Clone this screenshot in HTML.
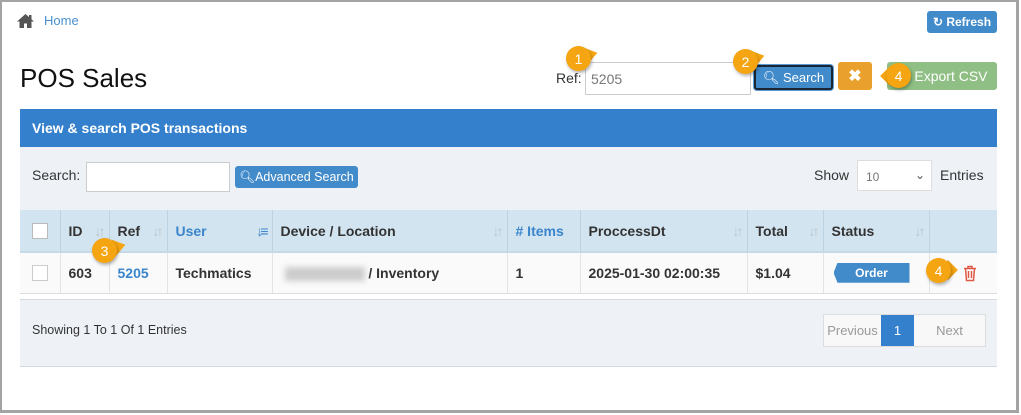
<!DOCTYPE html>
<html><head><meta charset="utf-8"><style>
*{box-sizing:border-box;margin:0;padding:0}
body{width:1021px;height:415px;background:#fff;font-family:"Liberation Sans",Arial,sans-serif;position:relative;overflow:hidden;color:#333}
.a{position:absolute}
.frame{left:0;top:0;width:1019px;height:413px;border:2px solid #a3a3a3;border-right-width:3px;border-bottom-width:3px}
.btn{position:absolute;color:#fff;border-radius:3px;font-size:13px;display:flex;align-items:center;justify-content:center}
th,td{font-size:14px;font-weight:bold;text-align:left;padding-left:8px;border-right:1px solid #e3e3e3}
.cl{position:absolute;width:25px;height:25px}
.cl .c{position:absolute;left:0;top:0;width:25px;height:25px;border-radius:50%;background:#f5a511;color:#fff;font-size:14px;display:flex;align-items:center;justify-content:center;box-shadow:1px 2px 3px rgba(0,0,0,.3);z-index:2}
.cl .t{position:absolute;width:14px;height:14px;background:#f5a511;top:6px;z-index:1}
.srt{position:absolute;right:6px;top:13px;color:#b8c4cc;font-size:14px;font-weight:bold;letter-spacing:-3px}
</style></head><body>
<div class="a frame"></div>
<svg class="a" style="left:16px;top:13px" width="19" height="16" viewBox="0 0 19 16"><path d="M9.5 1L1 8.5h2.5V15h4.5v-4.5h3V15h4.5V8.5H18z" fill="#555"/><rect x="13" y="2" width="2.5" height="4" fill="#555"/></svg>
<div class="a" style="left:44px;top:13px;font-size:13px;color:#4a90cf">Home</div>
<div class="btn" style="left:927px;top:11px;width:70px;height:22px;background:#428bca;font-weight:bold;font-size:12px">&#x21bb; Refresh</div>
<div class="a" style="left:20px;top:63px;font-size:26px;color:#111">POS Sales</div>
<div class="a" style="left:556px;top:70px;font-size:14px;color:#333">Ref:</div>
<div class="a" style="left:585px;top:62px;width:166px;height:33px;border:1px solid #ccc;padding:8px 5px;font-size:14px;color:#777">5205</div>
<div class="btn" style="left:754px;top:65px;width:79px;height:25px;background:#428bca;border:2px solid #1b2633;box-shadow:0 0 0 1px #5a9bd5">&#x1F50D;&#xFE0E; Search</div>
<div class="btn" style="left:838px;top:62px;width:34px;height:28px;background:#e9a02d;font-weight:bold;font-size:16px">&#x2716;</div>
<div class="btn" style="left:887px;top:62px;width:110px;height:28px;background:#8fbf84;font-size:14px">&#x2601; Export CSV</div>
<div class="a" style="left:20px;top:109px;width:977px;height:38px;background:#3580cc;color:#fff;font-weight:bold;font-size:14px;padding:11px 12px">View &amp; search POS transactions</div>
<div class="a" style="left:20px;top:147px;width:977px;height:64px;background:#eef2f7"></div>
<div class="a" style="left:32px;top:167px;font-size:14px">Search:</div>
<div class="a" style="left:86px;top:162px;width:144px;height:30px;border:1px solid #ccc;background:#fff"></div>
<div class="btn" style="left:235px;top:166px;width:123px;height:22px;background:#428bca;font-size:12.5px">&#x1F50D;&#xFE0E;Advanced Search</div>
<div class="a" style="left:814px;top:167px;font-size:14px">Show</div>
<div class="a" style="left:857px;top:160px;width:75px;height:31px;border:1px solid #ddd;background:#fff;font-size:12px;color:#777;padding:9px 8px">10<span style="position:absolute;right:6px;top:7px;color:#555">&#x2304;</span></div>
<div class="a" style="left:940px;top:167px;font-size:14px">Entries</div>
<table class="a" style="left:20px;top:210px;width:977px;border-collapse:collapse;border-bottom:1px solid #ddd">
<tr style="height:42px;background:#d2e4f0">
<th style="width:40px;border-right-color:#bcd3e3"><div style="width:16px;height:16px;border:1px solid #bbb;background:#fff;margin-left:4px"></div></th>
<th style="width:49px;position:relative;border-right-color:#bcd3e3">ID<span class="srt">&#x2193;&#x2191;</span></th>
<th style="width:58px;position:relative;border-right-color:#bcd3e3">Ref<span class="srt">&#x2193;&#x2191;</span></th>
<th style="width:105px;position:relative;color:#3a85cc;border-right-color:#bcd3e3">User<span class="srt" style="color:#3a85cc">&#x2193;&#x2261;</span></th>
<th style="width:235px;position:relative;border-right-color:#bcd3e3">Device / Location<span class="srt">&#x2193;&#x2191;</span></th>
<th style="width:73px;color:#3a85cc;border-right-color:#bcd3e3"># Items</th>
<th style="width:167px;position:relative;border-right-color:#bcd3e3">ProccessDt<span class="srt">&#x2193;&#x2191;</span></th>
<th style="width:76px;position:relative;border-right-color:#bcd3e3">Total<span class="srt">&#x2193;&#x2191;</span></th>
<th style="width:106px;position:relative;border-right-color:#bcd3e3">Status<span class="srt">&#x2193;&#x2191;</span></th>
<th style="border-right:none"></th></tr>
<tr style="height:41px;background:#fafafa;border-top:2px solid #c5d9e6">
<td><div style="width:16px;height:16px;border:1px solid #ccc;background:#fff;margin-left:4px"></div></td>
<td>603</td><td style="color:#3a85cc">5205</td><td>Techmatics</td>
<td><span style="display:inline-block;width:80px;height:14px;background:#ccc;filter:blur(3px);vertical-align:middle;margin-left:4px"></span> / Inventory</td>
<td>1</td><td>2025-01-30 02:00:35</td><td>$1.04</td>
<td><div style="position:relative;margin-left:2px;width:76px;height:20px;background:#428bca;color:#fff;font-size:12px;text-align:center;line-height:20px;clip-path:polygon(4px 0,100% 0,100% 100%,4px 100%,0 50%)">Order</div></td>
<td style="border-right:none"><svg width="14" height="17" viewBox="0 0 14 17" style="margin-left:25px;vertical-align:middle"><path d="M1 3.5h12M5 3.5V1.5h4v2M2.5 3.5l1 12h7l1-12M5.5 6v7M8.5 6v7" stroke="#e05a47" stroke-width="1.5" fill="none"/></svg></td></tr>
</table>
<div class="a" style="left:20px;top:299px;width:977px;height:68px;background:#eef2f7;border-top:1px solid #d6d9dd;border-bottom:1px solid #d6d9dd"></div>
<div class="a" style="left:32px;top:323px;font-size:12.5px">Showing 1 To 1 Of 1 Entries</div>
<div class="a" style="left:823px;top:314px;width:163px;height:33px;border:1px solid #ddd;background:#f8f8f8;font-size:13px;color:#999;display:flex">
<div style="width:57px;line-height:31px;text-align:center">Previous</div>
<div style="width:33px;background:#3580cc;color:#fff;line-height:31px;text-align:center">1</div>
<div style="flex:1;line-height:31px;text-align:center">Next</div></div>

<div class="cl" style="left:566px;top:46px"><div class="c">1</div><div class="t" style="left:13px;top:3px;transform:rotate(20deg) skewX(-20deg)"></div></div>
<div class="cl" style="left:733px;top:49px"><div class="c">2</div><div class="t" style="left:13px;top:3px;transform:rotate(20deg) skewX(-20deg)"></div></div>
<div class="cl" style="left:886px;top:63px"><div class="c">4</div><div class="t" style="left:-3px;top:6px;transform:rotate(45deg)"></div></div>
<div class="cl" style="left:92px;top:238px"><div class="c">3</div><div class="t" style="left:15px;top:3px;transform:rotate(20deg) skewX(-20deg)"></div></div>
<div class="cl" style="left:926px;top:258px"><div class="c">4</div><div class="t" style="left:15px;top:5px;transform:rotate(45deg)"></div></div>
</body></html>
